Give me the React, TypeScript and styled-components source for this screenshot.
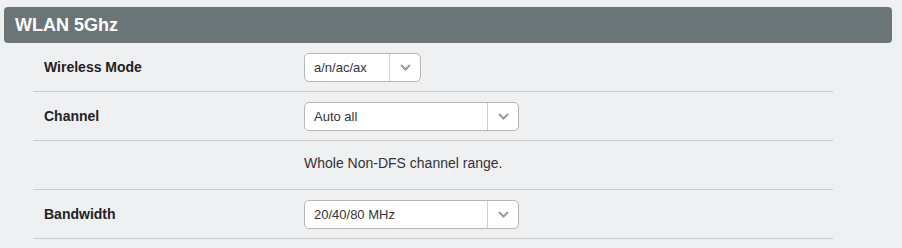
import React from "react";
import styled, { createGlobalStyle } from "styled-components";

const Global = createGlobalStyle`
  html, body { margin: 0; padding: 0; background: #eff0f2; }
  body { font-family: "Liberation Sans", Arial, sans-serif; }
`;

const Page = styled.div`
  padding: 7px 10px 0 4px;
`;

const Header = styled.div`
  height: 36px;
  background: #6b7577;
  border-radius: 4px;
  color: #fff;
  font-weight: bold;
  font-size: 18px;
  display: flex;
  align-items: center;
  padding-left: 11px;
  box-sizing: border-box;
`;

const Rows = styled.div`
  margin-left: 29px;
  width: 800px;
`;

const Row = styled.div`
  display: grid;
  grid-template-columns: 271px 1fr;
  align-items: center;
  height: 49px;
  box-sizing: border-box;
  border-bottom: 1px solid #cbcccd;
`;

const Label = styled.div`
  padding-left: 11px;
  font-size: 14px;
  font-weight: bold;
  color: #222;
`;

const Hint = styled.div`
  font-size: 14px;
  color: #333;
  padding-bottom: 5px;
`;

const Select = styled.div<{ $w: number }>`
  width: ${(p) => p.$w}px;
  height: 29px;
  box-sizing: border-box;
  border: 1px solid #b5b5b5;
  border-radius: 5px;
  background: #fff;
  display: flex;
  align-items: stretch;
  font-size: 13px;
  color: #333;
`;

const SelectText = styled.div`
  flex: 1;
  display: flex;
  align-items: center;
  padding-left: 9px;
`;

const Arrow = styled.div`
  width: 30px;
  border-left: 1px solid #cfcfcf;
  display: flex;
  align-items: center;
  justify-content: center;
`;

const Chevron = () => (
  <svg width="11" height="7" viewBox="0 0 11 7">
    <path d="M1 1 L5.5 5.5 L10 1" fill="none" stroke="#9a9a9a" strokeWidth="2" />
  </svg>
);

const Dropdown = ({ w, value }: { w: number; value: string }) => (
  <Select $w={w}>
    <SelectText>{value}</SelectText>
    <Arrow>
      <Chevron />
    </Arrow>
  </Select>
);

export default function App() {
  return (
    <Page>
      <Global />
      <Header>WLAN 5Ghz</Header>
      <Rows>
        <Row>
          <Label>Wireless Mode</Label>
          <div>
            <Dropdown w={117} value="a/n/ac/ax" />
          </div>
        </Row>
        <Row>
          <Label>Channel</Label>
          <div>
            <Dropdown w={215} value="Auto all" />
          </div>
        </Row>
        <Row>
          <Label></Label>
          <Hint>Whole Non-DFS channel range.</Hint>
        </Row>
        <Row>
          <Label>Bandwidth</Label>
          <div>
            <Dropdown w={215} value="20/40/80 MHz" />
          </div>
        </Row>
      </Rows>
    </Page>
  );
}
